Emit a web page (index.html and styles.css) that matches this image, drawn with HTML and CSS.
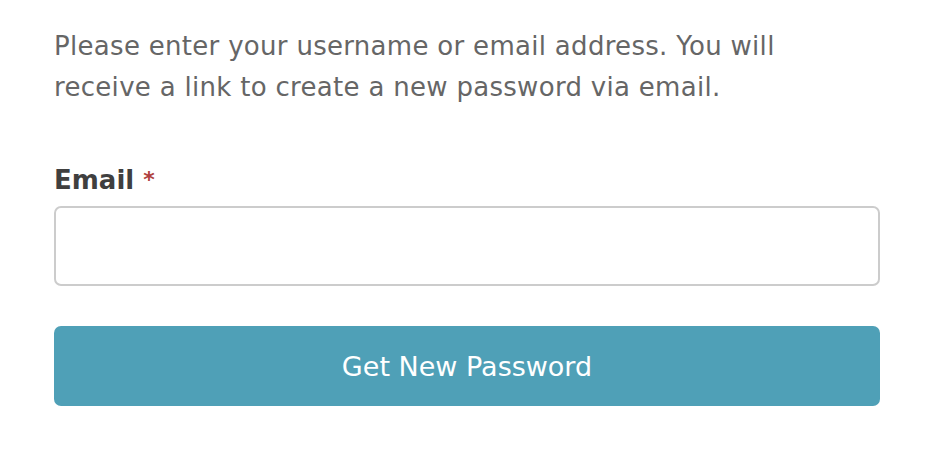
FILE: index.html
```html
<!DOCTYPE html>
<html lang="en">
<head>
<meta charset="utf-8">
<title>Lost Password</title>
<link rel="stylesheet" href="styles.css">
</head>
<body>
<form class="lost-password">
  <p class="intro">Please enter your username or email address. You will receive a link to create a new password via email.</p>
  <div class="field">
    <label class="field-label" for="user_login">Email <span class="required">*</span></label>
    <input class="field-input" type="text" id="user_login" name="user_login">
  </div>
  <button class="submit" type="submit">Get New Password</button>
</form>
</body>
</html>
```
FILE: styles.css
```css
html, body {
  margin: 0;
  padding: 0;
  background: #ffffff;
}

body {
  font-family: "DejaVu Sans", "Open Sans", sans-serif;
}

.lost-password {
  width: 826px;
  padding: 26px 0 0 54px;
}

.intro {
  margin: 0;
  width: 780px;
  font-size: 26px;
  line-height: 41px;
  letter-spacing: 0.3px;
  color: #666666;
}

.field {
  margin-top: 53px;
  display: flex;
  flex-direction: column;
}

.field-label {
  font-size: 26px;
  line-height: 38px;
  font-weight: 700;
  color: #3f3f3f;
  margin-bottom: 7px;
}

.required {
  color: #b0413e;
  font-size: 22px;
  vertical-align: 2px;
}

.field-input {
  box-sizing: border-box;
  height: 80px;
  width: 100%;
  border: 2px solid #cccccc;
  border-radius: 7px;
  background: #ffffff;
  margin: 0;
}

.submit {
  display: block;
  box-sizing: border-box;
  margin-top: 40px;
  width: 100%;
  height: 80px;
  border: none;
  border-radius: 7px;
  background: #4fa0b7;
  color: #ffffff;
  font-family: inherit;
  font-size: 27px;
  font-weight: 400;
  padding: 0;
}
```
